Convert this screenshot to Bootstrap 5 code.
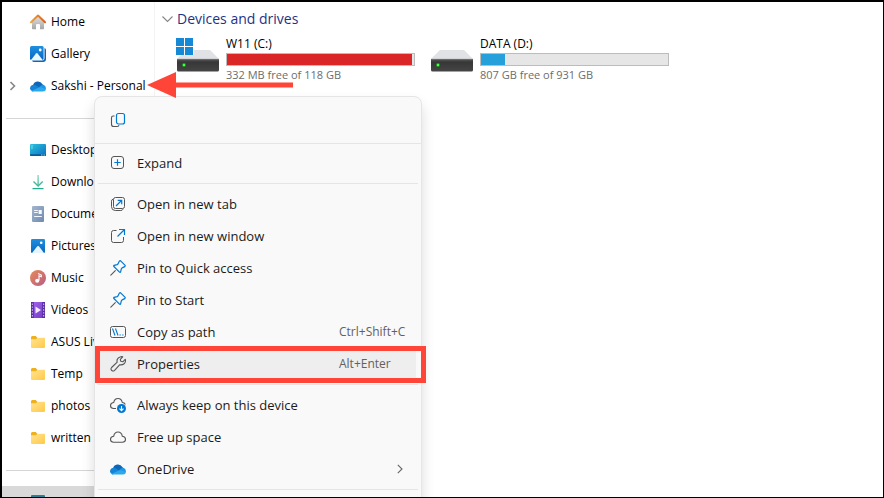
<!DOCTYPE html>
<html lang="en">
<head>
<meta charset="utf-8">
<meta name="viewport" content="width=device-width, initial-scale=1">
<title>Devices and drives</title>
<link href="https://cdn.jsdelivr.net/npm/bootstrap@5.3.0/dist/css/bootstrap.min.css" rel="stylesheet">
<style>
  body { font-family: "Open Sans", "Noto Sans", sans-serif; font-size: 12px; line-height: 16px; color: #000; background: #fff; }
  svg { display: block; flex: none; }
  .window-frame { border: solid #000; border-width: 2px 1px 1px 2px; }

  .side-pane { width: 153px; padding-top: 4px; border-right: 1px solid #f3f3f3; }
  .side-link { height: 32px; padding-left: 28px; gap: 5px; color: #000; text-decoration: none; white-space: nowrap; }
  .side-link:hover { background: #f0f0f0; color: #000; }
  .tree-row .side-link { padding-left: 0; }
  .tree-toggle { width: 28px; height: 32px; padding: 0 0 0 7px; border: 0; background: none; }
  .side-rule { height: 1px; margin: 16px 4px 15px; background: #d5d5d5; }
  .side-selected { background: #d9d9d9; }

  .main-pane { padding: 7px; }
  .group-toggle { gap: 4px; padding: 0; border: 0; background: none; color: #1e3287; font-size: 14px; line-height: 20px; }
  .drive-list { gap: 16px; padding: 7px 0 0 13px; }
  .drive { gap: 7px; }
  .drive-info { width: 189px; }
  .drive-meta { color: #6d6d6d; font-size: 11px; margin-top: 1px; }
  .drive .progress { --bs-progress-height: 13px; --bs-progress-bg: #e6e6e6; --bs-progress-border-radius: 0; border: 1px solid #bcbcbc; margin-top: 1px; }
  .fill-full { background: #da2626; }
  .fill-ok { background: #26a0da; }

  .context-menu { left: 92px; top: 94px; width: 328px; height: 480px; background: #f9f9f9; border: 1px solid #e5e5e5; border-radius: 8px; box-shadow: 0 8px 14px rgba(0,0,0,.14); z-index: 2; }
  .menu-tools { height: 47px; padding-left: 11px; border-bottom: 1px solid #e5e5e5; margin-bottom: 3px; }
  .tool-btn { padding: 4px; border: 0; background: none; }
  .menu-entry { width: 318px; height: 32px; margin-left: 3px; padding: 0 0 0 12px; gap: 11px; border: 0; border-radius: 4px; background: none; color: #1b1b1b; font-size: 13px; text-align: left; white-space: nowrap; }
  .menu-entry:hover, .menu-entry.hot { background: #eee; }
  .keys { width: 77px; font-size: 12px; color: #616161; }
  .submenu-mark { margin-right: 13px; }
  .menu-rule { height: 1px; margin: 4px 3px; background: #e5e5e5; }
  .callout::after { content: ""; position: absolute; left: -3px; right: -10px; top: -2px; bottom: -3px; border: 5px solid #ff4438; pointer-events: none; }
  .pointer-arrow { left: 145px; top: 70px; z-index: 3; pointer-events: none; }
</style>
<script src="https://cdn.jsdelivr.net/npm/bootstrap@5.3.0/dist/js/bootstrap.bundle.min.js"></script>
</head>
<body>
<svg width="0" height="0" class="position-absolute" aria-hidden="true">
  <defs>
    <linearGradient id="gBlue" x1="0" y1="0" x2="0" y2="1"><stop offset="0" stop-color="#1d8fe0"/><stop offset="1" stop-color="#0a66c0"/></linearGradient>
    <linearGradient id="gDesk" x1="0" y1="0" x2="1" y2="1"><stop offset="0" stop-color="#2cc3dc"/><stop offset="1" stop-color="#0a6fc4"/></linearGradient>
    <linearGradient id="gDown" x1="0" y1="0" x2="0" y2="1"><stop offset="0" stop-color="#7ed3b6"/><stop offset="1" stop-color="#24ad8d"/></linearGradient>
    <linearGradient id="gDoc" x1="0" y1="0" x2="1" y2="1"><stop offset="0" stop-color="#a4b6cd"/><stop offset="1" stop-color="#6f8ab0"/></linearGradient>
    <linearGradient id="gMus" x1="0" y1="0" x2="1" y2="1"><stop offset="0" stop-color="#e98a58"/><stop offset="1" stop-color="#b65d86"/></linearGradient>
    <linearGradient id="gVid" x1="0" y1="0" x2="1" y2="1"><stop offset="0" stop-color="#a367ea"/><stop offset="1" stop-color="#7439c8"/></linearGradient>
    <linearGradient id="gFold" x1="0" y1="0" x2="1" y2="1"><stop offset="0" stop-color="#ffe491"/><stop offset="1" stop-color="#ffc94a"/></linearGradient>
    <linearGradient id="gHome" x1="0" y1="0" x2="0" y2="1"><stop offset="0" stop-color="#e2e2e2"/><stop offset="1" stop-color="#a5a5a5"/></linearGradient>
    <linearGradient id="gRoof" x1="0" y1="0" x2="1" y2="0"><stop offset="0" stop-color="#f0a33a"/><stop offset="1" stop-color="#d95f1e"/></linearGradient>
    <linearGradient id="gDrive" x1="0" y1="0" x2="0" y2="1"><stop offset="0" stop-color="#5a5a5a"/><stop offset=".25" stop-color="#373737"/><stop offset="1" stop-color="#454545"/></linearGradient>
    <symbol id="i-folder" viewBox="0 0 16 16"><path d="M1 3.500q0-1.500 1.200-1.500h3.500L7.500 4v3H1z" fill="#eeb01f"/><path d="M1 5.200h5L7.300 3.700H14q1 0 1 1V13q0 1-1 1H2q-1 0-1-1z" fill="url(#gFold)"/></symbol>
    <symbol id="i-onedrive" viewBox="0 0 16 16"><path d="M3 7.500a5 5 0 0 1 9.300-1.500q.8.500 1.200 1.500L10 10.500z" fill="#0d66b8"/><path d="M0 10.300A3.600 3.600 0 0 1 4.500 6.800L10.500 10 2.500 13.500A3.500 3.500 0 0 1 0 10.300z" fill="#1583d6"/><path d="M9.500 8.700Q12 6.100 14 7q2 1 2 3.800l-3 1.500z" fill="#1b96e4"/><path d="M1.300 12.900 10 9l5.900 2q-.2 2.500-3 2.500H4q-1.600 0-2.700-.6z" fill="#2ba9ec"/></symbol>
    <symbol id="i-pin" viewBox="0 0 16 16"><path d="M.8 15.200 5.300 10.700" stroke="#555" stroke-width="1.100" stroke-linecap="round"/><path d="M9.400 1.100q.8-.7 1.500 0l4 4q.7.800-.1 1.500l-2.700 1.300q-.5.300-.7.800l-.8 3.200q-.4.800-1.100.2L3.900 6.500q-.5-.8.200-1.100l3.100-.8q.5-.2.800-.7z" fill="none" stroke="#0078d4" stroke-width="1.200" stroke-linejoin="round"/></symbol>
    <symbol id="i-drive" viewBox="0 0 42 22"><path d="M9 0h24l9 9H0z" fill="#e1e2e5"/><path d="M0 9h42v11q0 1.500-1.500 1.500h-39Q0 21.500 0 20z" fill="url(#gDrive)"/><path d="M0 9.300h42" stroke="#7c7c7c" stroke-width=".7"/><circle cx="7" cy="15" r="2" fill="#139b18"/><circle cx="7" cy="15" r="1.200" fill="#4cff4c"/></symbol>
  </defs>
</svg>

<div class="window-frame position-relative d-flex vh-100 overflow-hidden">
  <nav class="side-pane flex-shrink-0">
    <a href="#" class="side-link d-flex align-items-center">
      <svg width="16" height="16" viewBox="0 0 16 16"><path d="M2 7.500 8 2l6 5.500v7q0 .8-.8.800H10V11q0-1-1-1H7q-1 0-1 1v4.300H2.800q-.8 0-.8-.8z" fill="url(#gHome)"/><path d="M1 8.300 8 1.500l7 6.800" fill="none" stroke="url(#gRoof)" stroke-width="2" stroke-linecap="round" stroke-linejoin="round"/></svg>
      <span>Home</span></a>
    <a href="#" class="side-link d-flex align-items-center">
      <svg width="16" height="16" viewBox="0 0 16 16"><path d="M14.500 2q1.500.3 1.500 2v9q0 3-3 3H4q-1.500 0-2-1.500h10q2.500 0 2.500-2.500z" fill="#0b67ba"/><rect width="13.600" height="14" rx="1.500" fill="url(#gBlue)"/><path d="M1 14 6 7.500q.8-.8 1.600 0L12.700 14z" fill="#eaf7ff"/><circle cx="10.200" cy="4" r="1.400" fill="#fff"/></svg>
      <span>Gallery</span></a>
    <div class="tree-row d-flex">
      <button type="button" class="tree-toggle" aria-label="Expand"><svg width="8" height="10" viewBox="0 0 8 10"><path d="M1.500 1l4 4-4 4" fill="none" stroke="#868686" stroke-width="1.600"/></svg></button>
      <a href="#" class="side-link d-flex align-items-center"><svg width="16" height="16"><use href="#i-onedrive"/></svg><span>Sakshi - Personal</span></a>
    </div>
    <div class="side-rule"></div>
    <a href="#" class="side-link d-flex align-items-center">
      <svg width="16" height="16" viewBox="0 0 16 16"><rect y="2" width="16" height="12" rx="1" fill="url(#gDesk)"/><path d="M1.500 4h1M1.500 6h1" stroke="#d8faff"/><path d="M0 12.300h16V13q0 1-1 1H1q-1 0-1-1z" fill="#0a5a98"/><path d="M11 13h4" stroke="#7fd2f4" stroke-dasharray="1 .5"/></svg>
      <span>Desktop</span></a>
    <a href="#" class="side-link d-flex align-items-center">
      <svg width="16" height="16" viewBox="0 0 16 16"><path d="M7.500 1h1.200v11H7.500z" fill="url(#gDown)"/><path d="M3.500 7.500 8.100 12l4.600-4.500" fill="none" stroke="#45b99a" stroke-width="1.400"/><path d="M2.500 14.600h11" stroke="#24ad8d" stroke-width="1.300"/></svg>
      <span>Downloads</span></a>
    <a href="#" class="side-link d-flex align-items-center">
      <svg width="16" height="16" viewBox="0 0 16 16"><rect x="2" width="12" height="16" rx="1" fill="url(#gDoc)"/><path d="M4.200 4.500h3.600M4.200 6.500h3.600M4.200 10.500h7.600" stroke="#f4f8ff"/><path d="M8.600 4h3.200v4H8.600z" fill="#f4f8ff"/></svg>
      <span>Documents</span></a>
    <a href="#" class="side-link d-flex align-items-center">
      <svg width="16" height="16" viewBox="0 0 16 16"><rect x="1" y="1" width="14" height="14" rx="1.300" fill="url(#gBlue)"/><path d="M2 15 7.300 8.300q.8-.8 1.600 0L14 15z" fill="#e4f5ff"/><circle cx="11.200" cy="4.800" r="1.300" fill="#fff"/></svg>
      <span>Pictures</span></a>
    <a href="#" class="side-link d-flex align-items-center">
      <svg width="16" height="16" viewBox="0 0 16 16"><circle cx="8" cy="8" r="8" fill="url(#gMus)"/><path d="M8 3.500 11.300 5v1.700L9 5.800v4.700" fill="none" stroke="#fff" stroke-width="1.100"/><circle cx="7.200" cy="10.700" r="2" fill="#fff"/></svg>
      <span>Music</span></a>
    <a href="#" class="side-link d-flex align-items-center">
      <svg width="16" height="16" viewBox="0 0 16 16"><rect x="1" width="14" height="16" rx="1" fill="url(#gVid)"/><path d="M1 0h2.800v16H1zM12.200 0H15v16h-2.800z" fill="#57309f"/><path d="M2.400 1.500v13M13.600 1.500v13" stroke="#c9a6f5" stroke-width="1.200" stroke-dasharray="1.400 1.500"/><path d="M5.500 4.600 11 8l-5.500 3.400z" fill="#f3eaff"/></svg>
      <span>Videos</span></a>
    <a href="#" class="side-link d-flex align-items-center"><svg width="16" height="16"><use href="#i-folder"/></svg><span>ASUS Live</span></a>
    <a href="#" class="side-link d-flex align-items-center"><svg width="16" height="16"><use href="#i-folder"/></svg><span>Temp</span></a>
    <a href="#" class="side-link d-flex align-items-center"><svg width="16" height="16"><use href="#i-folder"/></svg><span>photos</span></a>
    <a href="#" class="side-link d-flex align-items-center"><svg width="16" height="16"><use href="#i-folder"/></svg><span>written</span></a>
    <div class="side-rule"></div>
    <div class="side-link side-selected d-flex align-items-center"><svg width="16" height="16" viewBox="0 0 16 16"><rect x="1" y="1" width="14" height="11" rx="1" fill="#287f96"/><path d="M4 15h8" stroke="#777" stroke-width="2"/></svg></div>
  </nav>

  <main class="main-pane flex-fill">
    <button type="button" class="group-toggle d-flex align-items-center">
      <svg width="11" height="8" viewBox="0 0 11 8"><path d="M.5 1.500l5 5 5-5" fill="none" stroke="#858585" stroke-width="1.100"/></svg>
      <span>Devices and drives</span>
    </button>
    <div class="drive-list d-flex flex-wrap">
      <div class="drive d-flex">
        <svg width="44" height="36" viewBox="0 0 44 36"><svg x="2" y="14" width="42" height="22"><use href="#i-drive"/></svg><path d="M1 1h18v18H1z" fill="#fff" fill-opacity=".7"/><path d="M1 2h8v8H1zM10 2h8v8h-8zM1 11h8v8H1zM10 11h8v8h-8z" fill="#1589d6"/></svg>
        <div class="drive-info">
          <div>W11 (C:)</div>
          <div class="progress" role="progressbar" aria-label="W11 (C:)" aria-valuenow="99" aria-valuemin="0" aria-valuemax="100"><div class="progress-bar fill-full" style="width:99%"></div></div>
          <div class="drive-meta">332 MB free of 118 GB</div>
        </div>
      </div>
      <div class="drive d-flex">
        <svg width="42" height="36" viewBox="0 0 42 36"><svg y="14" width="42" height="22"><use href="#i-drive"/></svg></svg>
        <div class="drive-info">
          <div>DATA (D:)</div>
          <div class="progress" role="progressbar" aria-label="DATA (D:)" aria-valuenow="13" aria-valuemin="0" aria-valuemax="100"><div class="progress-bar fill-ok" style="width:13%"></div></div>
          <div class="drive-meta">807 GB free of 931 GB</div>
        </div>
      </div>
    </div>
  </main>

  <div class="context-menu position-absolute" role="menu">
    <div class="menu-tools d-flex align-items-center">
      <button type="button" class="tool-btn" aria-label="Copy"><svg width="16" height="16" viewBox="0 0 16 16"><path d="M4.500 4H3.200Q1.500 4 1.500 5.800v6.400q0 2.300 2.300 2.300h3.400q1.500 0 1.800-1.500" fill="none" stroke="#555" stroke-width="1.100"/><rect x="6.500" y="1.500" width="8" height="10.500" rx="2" fill="none" stroke="#0078d4" stroke-width="1.200"/></svg></button>
    </div>
    <button type="button" role="menuitem" class="menu-entry d-flex align-items-center"><svg width="16" height="16" viewBox="0 0 16 16"><rect x="1.500" y="1.500" width="12" height="12" rx="2.500" fill="none" stroke="#555"/><path d="M7.500 4.300v6.400M4.300 7.500h6.400" stroke="#0078d4" stroke-width="1.200"/></svg><span>Expand</span></button>
    <div class="menu-rule"></div>
    <button type="button" role="menuitem" class="menu-entry d-flex align-items-center"><svg width="16" height="16" viewBox="0 0 16 16"><rect x="3.500" y="1.500" width="11" height="11" rx="2" fill="none" stroke="#555"/><path d="M3 3.200Q1.500 3.500 1.500 5.200v5.500q0 3.800 3.800 3.800h5.500q1.600 0 2.200-1.300" fill="none" stroke="#555"/><path d="M6 10l5.500-5.500M7.700 4.300h4v4" fill="none" stroke="#0078d4" stroke-width="1.200"/></svg><span>Open in new tab</span></button>
    <button type="button" role="menuitem" class="menu-entry d-flex align-items-center"><svg width="16" height="16" viewBox="0 0 16 16"><path d="M6.500 2.500h-3q-2 0-2 2v8q0 2 2 2h8q2 0 2-2V9" fill="none" stroke="#555"/><path d="M7.500 8.500l7-7M9 1.500h5.500V7" fill="none" stroke="#0078d4" stroke-width="1.200"/></svg><span>Open in new window</span></button>
    <button type="button" role="menuitem" class="menu-entry d-flex align-items-center"><svg width="16" height="16"><use href="#i-pin"/></svg><span>Pin to Quick access</span></button>
    <button type="button" role="menuitem" class="menu-entry d-flex align-items-center"><svg width="16" height="16"><use href="#i-pin"/></svg><span>Pin to Start</span></button>
    <button type="button" role="menuitem" class="menu-entry d-flex align-items-center"><svg width="16" height="16" viewBox="0 0 16 16"><rect x=".5" y="2.500" width="15" height="11" rx="2" fill="none" stroke="#555"/><path d="M2.500 4.500l2.500 7M5.500 4.500l2.500 7M9.500 11h1.300M12.200 11h1.300" stroke="#0078d4" stroke-width="1.100"/></svg><span class="flex-fill">Copy as path</span><span class="keys">Ctrl+Shift+C</span></button>
    <button type="button" role="menuitem" class="menu-entry hot callout position-relative d-flex align-items-center"><svg width="16" height="16" viewBox="0 0 16 16"><path d="M10.700.8q1-.4 2 0L10.300 3.300l.5 2 2 .5 2.400-2.500q.5 1.200.2 2.400-.9 3.200-4.600 3.200-.6 0-1-.2L4.600 14.300q-1.300 1.300-2.800.2-1.600-1.400-.2-3L7.200 6.200q-.4-1.200 0-2.700Q7.800 1.600 10.700.8z" fill="none" stroke="#555" stroke-width="1.100" stroke-linejoin="round"/></svg><span class="flex-fill">Properties</span><span class="keys">Alt+Enter</span></button>
    <div class="menu-rule"></div>
    <button type="button" role="menuitem" class="menu-entry d-flex align-items-center"><svg width="16" height="16" viewBox="0 0 16 16"><path d="M6 11.500H3.500Q.5 11.300.5 8.500.6 5.800 3.700 5.500 4.500 1.500 8 1.500t4.300 4q2.200 0 3 2" fill="none" stroke="#555" stroke-width="1.100"/><circle cx="11.500" cy="11.500" r="4.500" fill="#0078d4"/><path d="M11.500 9v4.500M9.500 11.600l2 2 2-2" fill="none" stroke="#fff" stroke-width="1.100"/></svg><span>Always keep on this device</span></button>
    <button type="button" role="menuitem" class="menu-entry d-flex align-items-center"><svg width="16" height="16" viewBox="0 0 16 16"><path d="M3.500 13.200Q.5 13 .5 10.200.6 7.500 3.700 7.200 4.500 3 8 3t4.300 4.200q3.100.3 3.200 3 0 2.800-3 3z" fill="none" stroke="#555" stroke-width="1.100"/></svg><span>Free up space</span></button>
    <button type="button" role="menuitem" class="menu-entry d-flex align-items-center"><svg width="16" height="16"><use href="#i-onedrive"/></svg><span class="flex-fill">OneDrive</span><svg class="submenu-mark" width="6" height="10" viewBox="0 0 6 10"><path d="M.8.800 5 5 .8 9.200" fill="none" stroke="#666" stroke-width="1.100"/></svg></button>
    <div class="menu-rule"></div>
  </div>

  <svg class="pointer-arrow position-absolute" width="148" height="27" viewBox="0 0 148 27" aria-hidden="true"><path d="M0 13 29 0v10.500h117v5H29V26z" fill="#ff4438"/></svg>
</div>
</body>
</html>
